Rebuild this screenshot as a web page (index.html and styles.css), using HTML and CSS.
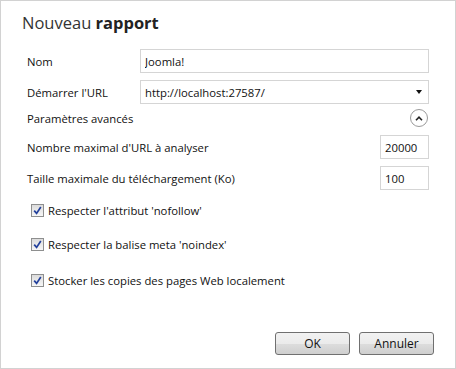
FILE: index.html
```html
<!DOCTYPE html>
<html lang="fr">
<head>
    <meta charset="UTF-8">
    <meta name="viewport" content="width=device-width, initial-scale=1.0">
    <title>Nouveau rapport</title>
    <link rel="stylesheet" href="styles.css">
</head>
<body>
    <div class="dialog">
        <h1 class="title">Nouveau <b>rapport</b></h1>
        <div class="form">
            <div class="row">
                <label for="name">Nom</label>
                <input class="field wide" type="text" id="name" value="Joomla!">
            </div>
            <div class="row">
                <label>Démarrer l'URL</label>
                <div class="field wide select">
                    <span>http://localhost:27587/</span>
                    <span class="arrow"></span>
                </div>
            </div>
            <div class="row adv">
                <span>Paramètres avancés</span>
                <span class="toggle">
                    <svg width="8" height="5" viewBox="0 0 8 5"><path d="M1 4.2 L4 1.2 L7 4.2" fill="none" stroke="#222" stroke-width="1.6"/></svg>
                </span>
            </div>
            <div class="row">
                <label for="maxurl">Nombre maximal d'URL à analyser</label>
                <input class="field short" type="text" id="maxurl" value="20000">
            </div>
            <div class="row">
                <label for="maxsize">Taille maximale du téléchargement (Ko)</label>
                <input class="field short" type="text" id="maxsize" value="100">
            </div>
            <div class="checks">
                <label class="check"><span class="box"><svg width="9" height="9" viewBox="0 0 9 9"><path d="M1.2 4.6 L3.6 7.4 L7.8 1" fill="none" stroke="#22409c" stroke-width="1.7"/></svg></span>Respecter l'attribut 'nofollow'</label>
                <label class="check"><span class="box"><svg width="9" height="9" viewBox="0 0 9 9"><path d="M1.2 4.6 L3.6 7.4 L7.8 1" fill="none" stroke="#22409c" stroke-width="1.7"/></svg></span>Respecter la balise meta 'noindex'</label>
                <label class="check"><span class="box"><svg width="9" height="9" viewBox="0 0 9 9"><path d="M1.2 4.6 L3.6 7.4 L7.8 1" fill="none" stroke="#22409c" stroke-width="1.7"/></svg></span>Stocker les copies des pages Web localement</label>
            </div>
        </div>
        <div class="buttons">
            <button type="submit">OK</button>
            <button type="button">Annuler</button>
        </div>
    </div>
</body>
</html>
```

FILE: styles.css
```css
* {
    margin: 0;
    padding: 0;
    box-sizing: border-box;
}
body {
    font-family: "Open Sans", "Noto Sans", sans-serif;
    font-size: 11.3px;
    color: #111;
    background-color: white;
}
.dialog {
    width: 456px;
    height: 369px;
    border: 1px solid #d2d2d2;
    padding: 10px 21px 13px 21px;
    display: flex;
    flex-direction: column;
}
.title {
    font-size: 16.5px;
    line-height: 24px;
    font-weight: normal;
    color: #333;
    margin-bottom: 14px;
}
.title b {
    font-weight: bold;
    color: #222;
}
.form {
    padding: 0 5px;
    display: flex;
    flex-direction: column;
    gap: 7px;
}
.row {
    height: 24px;
    display: flex;
    justify-content: space-between;
    align-items: center;
}
.row label {
    width: 113px;
    white-space: nowrap;
}
.field {
    height: 24px;
    border: 1px solid #d5d5d5;
    padding: 0 4px;
    font-family: inherit;
    font-size: inherit;
    color: #111;
    background-color: white;
}
input:focus {
    outline: none;
}
.wide {
    width: 289px;
}
.short {
    width: 49px;
}
.select {
    display: flex;
    justify-content: space-between;
    align-items: center;
    padding-right: 6px;
}
.arrow {
    width: 0;
    height: 0;
    border-left: 3.5px solid transparent;
    border-right: 3.5px solid transparent;
    border-top: 4px solid #111;
}
.adv {
    height: 20px;
    margin-top: -3px;
}
.toggle {
    width: 18px;
    height: 18px;
    margin-right: 1px;
    border: 1px solid #9a9a9a;
    border-radius: 50%;
    display: flex;
    justify-content: center;
    align-items: center;
}
.checks {
    margin-top: 5px;
    padding-left: 4px;
    display: flex;
    flex-direction: column;
    gap: 18px;
}
.check {
    height: 16px;
    display: flex;
    align-items: center;
    gap: 4px;
}
.check:last-child {
    margin-top: 2px;
}
.box {
    width: 13px;
    height: 13px;
    border: 1px solid #8e8f8f;
    background: linear-gradient(#dcdcdc, #f6f6f6);
    display: flex;
    justify-content: center;
    align-items: center;
}
.buttons {
    margin-top: auto;
    display: flex;
    justify-content: flex-end;
    gap: 9px;
}
.buttons button {
    width: 75px;
    height: 23px;
    border: 1px solid #707070;
    border-radius: 3px;
    background: linear-gradient(#f2f2f2 0%, #ebebeb 50%, #dddddd 51%, #cfcfcf 100%);
    font-family: inherit;
    font-size: 12px;
    color: #111;
}
```
